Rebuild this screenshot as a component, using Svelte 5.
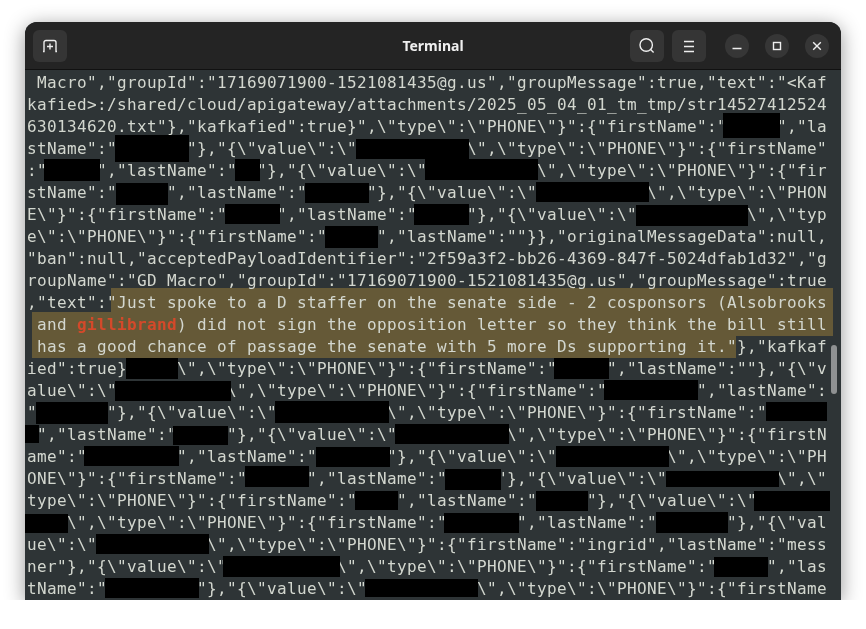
<script lang="ts">
	const COLS = 80;
	const val = '"},"{\\"value\\":\\"';
	const phone = '\\",\\"type\\":\\"PHONE\\"}":{"firstName":"';
	const last = '","lastName":"';

	// each row is [start column, text] pairs, the gaps sit under the black boxes
	const rows: [number, string][][] = [
		[[0, ' Macro","groupId":"17169071900-1521081435@g.us","groupMessage":true,"text":"<Kaf']],
		[[0, 'kafied>:/shared/cloud/apigateway/attachments/2025_05_04_01_tm_tmp/str14527412524']],
		[[0, '630134620.txt"},"kafkafied":true}",\\"type\\":\\"PHONE\\"}":{"firstName":"'], [75, '","la']],
		[[0, 'stName":"'], [16, val], [44, '\\",\\"type\\":\\"PHONE\\"}":{"firstName"']],
		[[0, ':"'], [7, last], [23, val], [51, '\\",\\"type\\":\\"PHONE\\"}":{"fir']],
		[[0, 'stName":"'], [14, last], [34, val], [62, '\\",\\"type\\":\\"PHON']],
		[[0, 'E\\"}":{"firstName":"'], [25, last], [44, val], [72, '\\",\\"typ']],
		[[0, 'e\\":\\"PHONE\\"}":{"firstName":"'], [35, last + '"}},"originalMessageData":null,']],
		[[0, '"ban":null,"acceptedPayloadIdentifier":"2f59a3f2-bb26-4369-847f-5024dfab1d32","g']],
		[[0, 'roupName":"GD Macro","groupId":"17169071900-1521081435@g.us","groupMessage":true']],
		[[0, ',"text":"Just spoke to a D staffer on the senate side - 2 cosponsors (Alsobrooks']],
		[[0, ' and gillibrand) did not sign the opposition letter so they think the bill still']],
		[[0, ' has a good chance of passage the senate with 5 more Ds supporting it."},"kafkaf']],
		[[0, 'ied":true}'], [15, phone], [58, last + '"},"{\\"v']],
		[[0, 'alue\\":\\"'], [20, phone], [67, '","lastName":']],
		[[0, '"'], [8, val], [36, phone]],
		[[1, last], [20, val], [48, '\\",\\"type\\":\\"PHONE\\"}":{"firstN']],
		[[0, 'ame":"'], [15, last], [36, val], [64, '\\",\\"type\\":\\"PH']],
		[[0, 'ONE\\"}":{"firstName":"'], [28, last], [47, val], [75, '\\",\\"']],
		[[0, 'type\\":\\"PHONE\\"}":{"firstName":"'], [37, last], [56, val]],
		[[4, phone], [49, last], [70, '"},"{\\"val']],
		[[0, 'ue\\":\\"'], [18, phone + 'ingrid' + last + 'mess']],
		[[0, 'ner"},"{\\"value\\":\\"'], [31, phone], [74, '","las']],
		[[0, 'tName":"'], [17, val], [45, '\\",\\"type\\":\\"PHONE\\"}":{"firstName']]
	];

	const lines = rows.map((parts) =>
		parts.reduce((s, [col, text]) => s.padEnd(col) + text, '').padEnd(COLS)
	);

	// page coordinates read off the screenshot: x0, x1, y0, y1
	const marks = [
		[111, 833, 288, 313],
		[32, 833, 312, 336],
		[32, 736, 334, 358]
	];
	const boxes = [
		[723, 780, 113, 138],
		[115, 189, 135, 162], [356, 469, 139, 159],
		[44, 100, 159, 181], [235, 260, 159, 181], [425, 538, 159, 180],
		[116, 168, 183, 205], [305, 369, 183, 203], [536, 649, 182, 202],
		[225, 280, 204, 224], [414, 469, 204, 225], [636, 748, 205, 226],
		[325, 378, 226, 248],
		[126, 178, 358, 379], [554, 609, 358, 379],
		[115, 231, 381, 401], [604, 698, 380, 400],
		[36, 108, 402, 424], [275, 389, 401, 423], [766, 827, 402, 421],
		[25, 39, 425, 443], [173, 228, 426, 445], [395, 509, 424, 444],
		[84, 179, 446, 466], [316, 390, 447, 467], [556, 669, 446, 467],
		[245, 309, 466, 487], [445, 501, 469, 490], [666, 779, 471, 487],
		[355, 398, 491, 510], [536, 588, 491, 511], [754, 830, 491, 511],
		[25, 68, 514, 533], [444, 519, 513, 533], [656, 728, 512, 533],
		[96, 209, 534, 554],
		[223, 340, 556, 577], [714, 768, 557, 577],
		[105, 199, 578, 598], [365, 478, 579, 597]
	];

	function place([x0, x1, y0, y1]: number[]) {
		return `left:${x0 - 25}px;top:${y0 - 70}px;width:${x1 - x0}px;height:${y1 - y0}px`;
	}
</script>

<div class="window">
	<header class="titlebar">
		<div class="side left">
			<button class="tool" aria-label="New tab">
				<svg width="16" height="16" viewBox="0 0 16 16">
					<path d="M1 13.5h1V4.5a2 2 0 0 1 2-2h8a2 2 0 0 1 2 2v9h1" />
					<path d="M8 5.5v6M5 8.5h6" />
				</svg>
			</button>
		</div>
		<span class="title">Terminal</span>
		<div class="side right">
			<button class="tool" aria-label="Search">
				<svg width="18" height="18" viewBox="0 0 18 18">
					<circle cx="8.2" cy="8" r="6.2" />
					<path d="M12.6 12.4l3 3" />
				</svg>
			</button>
			<button class="tool" aria-label="Menu">
				<svg width="16" height="16" viewBox="0 0 16 16">
					<path d="M3 3.5h10M3 8.5h10M3 13.5h10" />
				</svg>
			</button>
			<div class="controls">
				<button class="circle" aria-label="Minimize">
					<svg width="12" height="12" viewBox="0 0 12 12"><path d="M1.5 8.5h9" /></svg>
				</button>
				<button class="circle" aria-label="Maximize">
					<svg width="12" height="12" viewBox="0 0 12 12"><rect x="2.5" y="2.5" width="7" height="7" /></svg>
				</button>
				<button class="circle" aria-label="Close">
					<svg width="12" height="12" viewBox="0 0 12 12"><path d="M2.2 2.2l7.6 7.6M9.8 2.2l-7.6 7.6" /></svg>
				</button>
			</div>
		</div>
	</header>

	<main class="term">
		{#each marks as m}
			<div class="mark" style={place(m)}></div>
		{/each}
		<div class="lines">
			{#each lines as line}
				<div class="line">
					{#each line.split(/(gillibrand)/) as part}
						{#if part === 'gillibrand'}<b class="hit">{part}</b>{:else}{part}{/if}
					{/each}
				</div>
			{/each}
		</div>
		{#each boxes as b}
			<div class="box" style={place(b)}></div>
		{/each}
		<div class="scroll"></div>
	</main>
</div>

<style>
	:global(body) {
		background: #fff;
	}

	/* the window clips its corners, so the shadow goes on the parent */
	:global(#app) {
		filter: drop-shadow(0 4px 10px rgba(0, 0, 0, 0.42));
	}

	.window {
		width: 816px;
		height: 578px;
		margin: 22px 0 0 25px;
		display: flex;
		flex-direction: column;
		border-radius: 12px 12px 0 0;
		overflow: hidden;
		background: #2e3436;
	}

	.titlebar {
		height: 47px;
		flex: none;
		display: grid;
		grid-template-columns: 1fr auto 1fr;
		align-items: center;
		background: #242424;
		border-bottom: 1px solid #111;
	}

	.side {
		display: flex;
		align-items: center;
	}

	.left {
		padding-left: 8px;
	}

	.right {
		justify-content: flex-end;
		gap: 8px;
		padding-right: 12px;
	}

	.title {
		font-family: "Noto Sans", sans-serif;
		font-size: 14px;
		font-weight: 700;
		color: #efefef;
	}

	button {
		border: 0;
		padding: 0;
		display: flex;
		align-items: center;
		justify-content: center;
	}

	svg {
		fill: none;
		stroke: #eee;
		stroke-width: 1.4;
	}

	.tool {
		width: 34px;
		height: 32px;
		border-radius: 6px;
		background: #353535;
	}

	.controls {
		display: flex;
		gap: 16px;
		margin-left: 11px;
	}

	.circle {
		width: 24px;
		height: 24px;
		border-radius: 50%;
		background: #363636;
	}

	.term {
		flex: 1;
		position: relative;
		min-height: 0;
	}

	.lines {
		position: relative;
		padding: 2px 0 0 2px;
		font-family: "DejaVu Sans Mono", monospace;
		font-size: 16px;
		letter-spacing: 0.368px;
		line-height: 22px;
		color: #d3d7cf;
	}

	.line {
		height: 22px;
		white-space: pre;
	}

	.hit {
		color: #d4492a;
	}

	.mark {
		position: absolute;
		background: #655937;
	}

	.box {
		position: absolute;
		background: #000;
	}

	.scroll {
		position: absolute;
		left: 806px;
		top: 275px;
		width: 6px;
		height: 49px;
		border-radius: 3px;
		background: #8f9192;
	}
</style>
